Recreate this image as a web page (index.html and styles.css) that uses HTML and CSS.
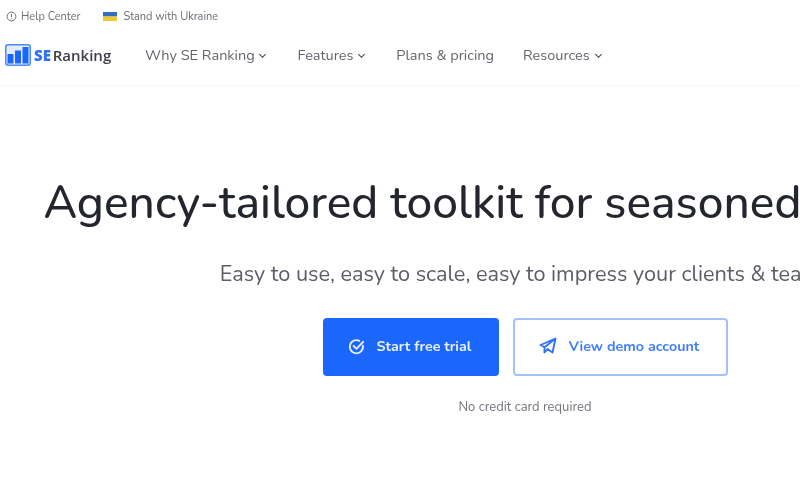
FILE: index.html
```html
<!DOCTYPE html>
<html lang="en">
  <head>
    <meta charset="UTF-8" />
    <title>SE Ranking</title>
    <link rel="stylesheet" href="styles.css">
  </head>
  <body>
    <div class="page">
      <div class="topbar">
        <a class="top-link">
          <svg class="help-icon" viewBox="0 0 12 12" width="11" height="11">
            <circle cx="6" cy="6" r="4.8" fill="none" stroke="#666" stroke-width="1" />
            <path d="M6 3.2v3.4M6 8v.9" fill="none" stroke="#666" stroke-width="1" />
          </svg>
          Help Center
        </a>
        <a class="top-link">
          <svg class="flag" viewBox="0 0 14 9" width="14" height="9">
            <rect width="14" height="4.5" fill="#2f6fc4" />
            <rect y="4.5" width="14" height="4.5" fill="#f2c92e" />
          </svg>
          Stand with Ukraine
        </a>
      </div>

      <div class="navbar">
        <div class="logo">
          <svg viewBox="0 0 26 22" width="26" height="22">
            <rect x="0.750" y="0.750" width="24.500" height="20.500" rx="2.500" fill="#e3edff" stroke="#4a8af9" stroke-width="1.500" />
            <rect x="2.500" y="10" width="6" height="9.500" fill="#1b66fb" />
            <rect x="10" y="6.500" width="6" height="13" fill="#1b66fb" />
            <rect x="17.500" y="3" width="6" height="16.500" fill="#1b66fb" />
          </svg>
          <span class="logo-text"><b>SE</b> Ranking</span>
        </div>
        <ul class="nav-menu">
          <li>Why SE Ranking <span class="caret"></span></li>
          <li>Features <span class="caret"></span></li>
          <li>Plans &amp; pricing</li>
          <li>Resources <span class="caret"></span></li>
        </ul>
      </div>

      <div class="hero">
        <h1>Agency-tailored toolkit for seasoned SEO pros</h1>
        <p class="subtitle">Easy to use, easy to scale, easy to impress your clients &amp; team</p>
        <div class="button-group">
          <a class="btn btn-primary">
            <svg viewBox="0 0 18 18" width="17" height="17" fill="none" stroke="#e8f0ff" stroke-width="2" stroke-linecap="round" stroke-linejoin="round">
              <path d="M15.800 8.200A7 7 0 1 1 12 3" />
              <path d="M6 8.500l3 3 7-7.500" />
            </svg>
            Start free trial
          </a>
          <a class="btn btn-outline">
            <svg viewBox="0 0 18 18" width="18" height="18" fill="none" stroke="#2f73f7" stroke-width="1.900" stroke-linejoin="round">
              <path d="M16.500 1.500L1.500 8l4 2.200L16.500 1.500l-3 14-5-3.500-3 3.500v-5.300" />
            </svg>
            View demo account
          </a>
        </div>
        <p class="note">No credit card required</p>
      </div>
    </div>
  </body>
</html>
```

FILE: styles.css
```css
* {
  margin: 0;
  padding: 0;
  box-sizing: border-box;
}

html,
body {
  height: 100%;
  overflow: hidden;
}

body {
  font-family: "Nunito", "Noto Sans", "Open Sans", sans-serif;
  background: #fff;
  color: #24262e;
}

/* the reference is a soft, upscaled capture */
.page {
  width: 1050px;
  filter: blur(0.4px);
}

.topbar {
  display: flex;
  gap: 23px;
  height: 33px;
  padding-left: 6px;
  align-items: center;
}

.top-link {
  display: flex;
  align-items: center;
  gap: 4px;
  font-size: 11px;
  color: #6b6d75;
}

.flag {
  margin-right: 2px;
}

.navbar {
  display: flex;
  align-items: center;
  height: 51px;
  padding-left: 5px;
  padding-bottom: 7px;
  background: #fff;
  box-shadow: 0 3px 5px rgba(0, 0, 0, 0.02);
}

.logo {
  display: flex;
  align-items: center;
  gap: 3px;
  width: 140px;
}

.logo-text {
  font-family: "Open Sans", sans-serif;
  font-size: 15px;
  font-weight: 600;
  word-spacing: -2px;
  color: #3d4048;
}

.logo-text b {
  color: #2f73f7;
}

.nav-menu {
  display: flex;
  gap: 29px;
  list-style: none;
  font-size: 14.500px;
  color: #62646c;
}

.caret {
  display: inline-block;
  width: 5px;
  height: 5px;
  margin: 0 3px 3px 2px;
  border-right: 1.500px solid #44464e;
  border-bottom: 1.500px solid #44464e;
  transform: rotate(45deg);
}

.hero {
  text-align: center;
  padding-top: 91px;
}

.hero h1 {
  padding-left: 1px;
  font-size: 46px;
  font-weight: 500;
  line-height: 56px;
  white-space: nowrap;
}

.subtitle {
  margin-top: 29px;
  padding-right: 10px;
  font-size: 21.700px;
  line-height: 28px;
  color: #5c5e66;
  white-space: nowrap;
}

.button-group {
  display: flex;
  justify-content: center;
  gap: 14px;
  margin-top: 30px;
}

.btn {
  display: flex;
  align-items: center;
  justify-content: center;
  gap: 12px;
  height: 58px;
  padding: 0 2px 2px 0;
  border-radius: 4px;
  font-size: 14.300px;
  font-weight: 700;
}

.btn-primary {
  width: 176px;
  background: #1b66fb;
  color: #e8f0ff;
}

.btn-outline {
  width: 215px;
  background: #fff;
  color: #3f7ff8;
  border: 2px solid #a3c2fc;
}

.note {
  margin-top: 23px;
  font-size: 13px;
  line-height: 16px;
  color: #74767e;
}
```
